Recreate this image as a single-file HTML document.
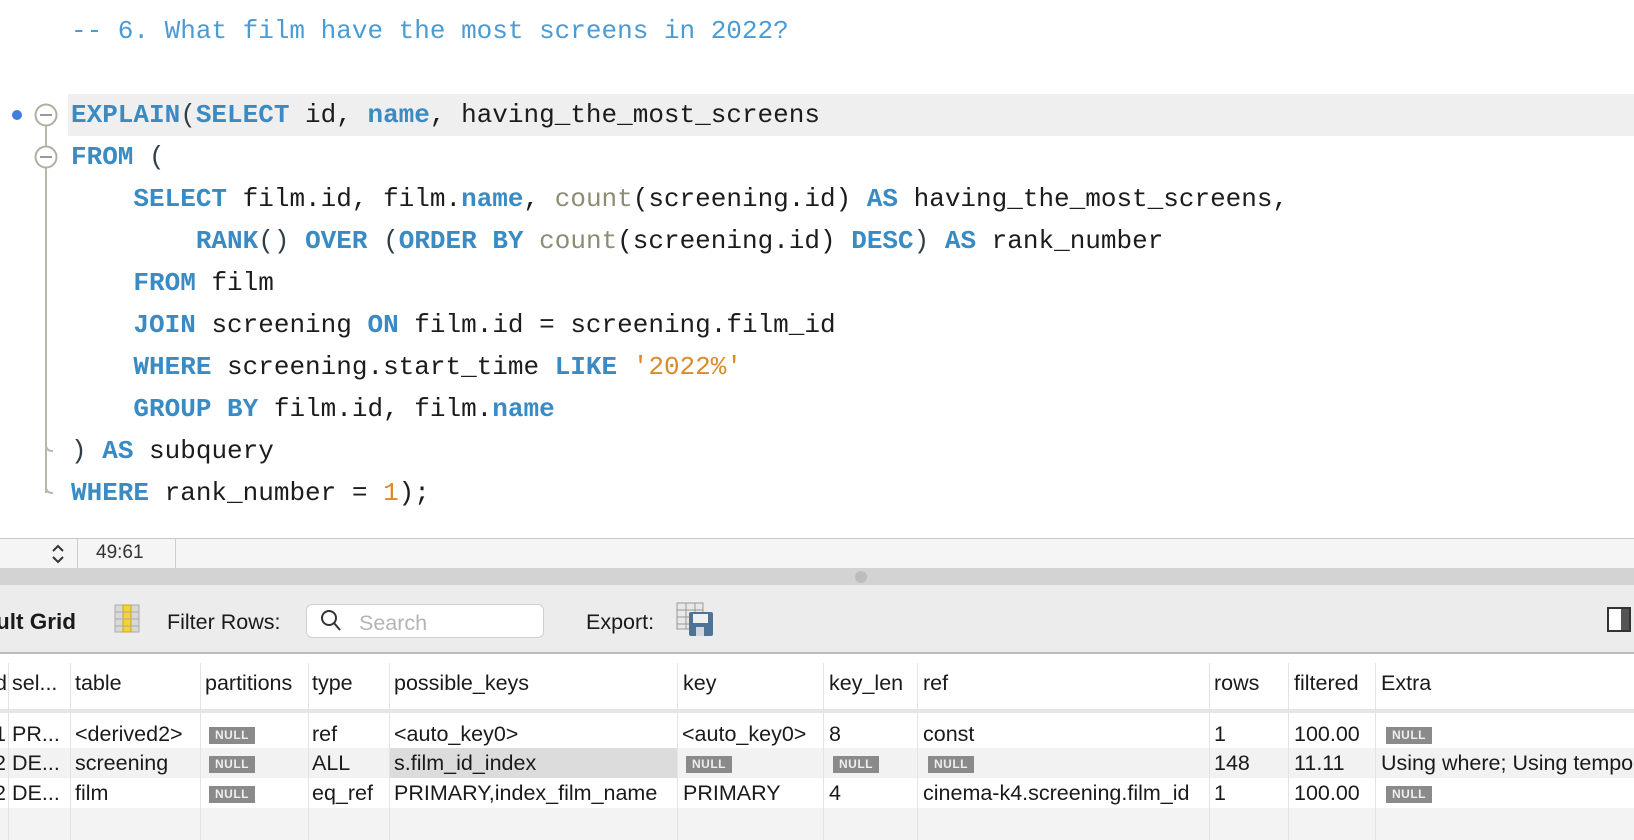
<!DOCTYPE html>
<html><head><style>
body{margin:0;width:1634px;height:840px;overflow:hidden;background:#fff;position:relative;font-family:"Liberation Sans",sans-serif}
.l{position:absolute;left:71px;height:42px;line-height:42px;font-family:"Liberation Mono",monospace;font-size:26px;color:#1c1c1c;white-space:pre}
.k{color:#3a8bc4;font-weight:bold}
.c{color:#4b9bd3}
.f{color:#8e8c74}
.s{color:#d98b2b}
.p{color:#2f3f48}
.a{position:absolute}
.t{position:absolute;font-size:21.5px;color:#1a1a1a;white-space:nowrap;line-height:30px}
.n{display:inline-block;background:#8a8a8a;color:#eee;font-size:12px;font-weight:bold;line-height:17px;padding:0 6px;vertical-align:middle;letter-spacing:.5px}
.v{position:absolute;top:663px;width:1px;height:177px;background:#e3e3e3}
</style></head><body>
<div class="a" style="left:68px;top:94px;width:1566px;height:42px;background:#efefef"></div>
<div class="l" style="top:10px"><span class="c">-- 6. What film have the most screens in 2022?</span></div>
<div class="l" style="top:94px"><span class="k">EXPLAIN</span><span class="p">(</span><span class="k">SELECT</span> id, <span class="k">name</span>, having_the_most_screens</div>
<div class="l" style="top:136px"><span class="k">FROM</span> <span class="p">(</span></div>
<div class="l" style="top:178px">    <span class="k">SELECT</span> film.id, film.<span class="k">name</span>, <span class="f">count</span>(screening.id) <span class="k">AS</span> having_the_most_screens,</div>
<div class="l" style="top:220px">        <span class="k">RANK</span><span class="p">()</span> <span class="k">OVER</span> <span class="p">(</span><span class="k">ORDER BY</span> <span class="f">count</span>(screening.id) <span class="k">DESC</span><span class="p">)</span> <span class="k">AS</span> rank_number</div>
<div class="l" style="top:262px">    <span class="k">FROM</span> film</div>
<div class="l" style="top:304px">    <span class="k">JOIN</span> screening <span class="k">ON</span> film.id = screening.film_id</div>
<div class="l" style="top:346px">    <span class="k">WHERE</span> screening.start_time <span class="k">LIKE</span> <span class="s">'2022%'</span></div>
<div class="l" style="top:388px">    <span class="k">GROUP BY</span> film.id, film.<span class="k">name</span></div>
<div class="l" style="top:430px"><span class="p">)</span> <span class="k">AS</span> subquery</div>
<div class="l" style="top:472px"><span class="k">WHERE</span> rank_number = <span class="s">1</span>);</div>
<svg class="a" style="left:0;top:90px" width="70" height="420">
<circle cx="17" cy="25" r="5" fill="#3f7fe0"/>
<line x1="46" y1="36" x2="46" y2="56" stroke="#b8b8a8" stroke-width="2"/>
<line x1="46" y1="78" x2="46" y2="403" stroke="#b8b8a8" stroke-width="2"/>
<path d="M46 355 q0 6 7 6" fill="none" stroke="#b8b8a8" stroke-width="2"/>
<path d="M46 397 q0 6 7 6" fill="none" stroke="#b8b8a8" stroke-width="2"/>
<circle cx="46" cy="25" r="10.5" fill="#fff" stroke="#b0b0a0" stroke-width="2"/>
<line x1="40" y1="25" x2="52" y2="25" stroke="#999" stroke-width="2"/>
<circle cx="46" cy="67" r="10.5" fill="#fff" stroke="#b0b0a0" stroke-width="2"/>
<line x1="40" y1="67" x2="52" y2="67" stroke="#999" stroke-width="2"/>
</svg>
<!-- status bar -->
<div class="a" style="left:0;top:538px;width:1634px;height:30px;background:#f5f5f5;border-top:1px solid #c8c8c8"></div>
<div class="a" style="left:77px;top:539px;width:1px;height:29px;background:#ccc"></div>
<div class="a" style="left:175px;top:539px;width:1px;height:29px;background:#ccc"></div>
<svg class="a" style="left:50px;top:543px" width="16" height="22"><path d="M3 8l5-5 5 5M3 14l5 5 5-5" fill="none" stroke="#333" stroke-width="2"/></svg>
<div class="t" style="left:96px;top:538px;font-size:19px;color:#333">49:61</div>
<div class="a" style="left:0;top:568px;width:1634px;height:17px;background:#d3d3d3"></div>
<div class="a" style="left:855px;top:571px;width:12px;height:12px;border-radius:6px;background:#bdbdbd"></div>
<!-- toolbar -->
<div class="a" style="left:0;top:585px;width:1634px;height:67px;background:#ececec;border-bottom:2px solid #bcbcbc"></div>
<div class="t" style="left:-4px;top:607px;font-weight:bold;font-size:22.5px">ult Grid</div>
<svg class="a" style="left:114px;top:604px" width="28" height="30"><rect x="1" y="1" width="24" height="27" fill="#d8d8d8" stroke="#aaa"/><rect x="9" y="1" width="8" height="27" fill="#f4d23a" stroke="#c8a820"/><path d="M1 8h24M1 15h24M1 22h24" stroke="#aaa"/></svg>
<div class="t" style="left:167px;top:607px">Filter Rows:</div>
<div class="a" style="left:306px;top:604px;width:236px;height:32px;background:#fff;border:1px solid #cfcfcf;border-radius:6px"></div>
<svg class="a" style="left:320px;top:609px" width="24" height="24"><circle cx="9" cy="9" r="7" fill="none" stroke="#333" stroke-width="2"/><path d="M14 14l6 7" stroke="#333" stroke-width="2"/></svg>
<div class="t" style="left:359px;top:608px;color:#b4b4b4">Search</div>
<div class="t" style="left:586px;top:607px">Export:</div>
<svg class="a" style="left:676px;top:601px" width="40" height="40"><rect x="1" y="2" width="26" height="26" fill="#e8e8e8" stroke="#999"/><path d="M1 9h26M1 16h26M1 23h26M10 2v26M19 2v26" stroke="#999"/><rect x="13" y="11" width="24" height="24" rx="2" fill="#4e7397"/><rect x="17" y="13" width="15" height="9" fill="#f0f0f0"/><rect x="20" y="26" width="8" height="9" fill="#cfd8e0"/></svg>
<div class="a" style="left:1607px;top:607px;width:24px;height:25px;border:2px solid #333;box-sizing:border-box;background:linear-gradient(90deg,#fff 60%,#555 60%)"></div>
<!-- grid -->
<div class="a" style="left:0;top:709px;width:1634px;height:4px;background:#e6e6e6"></div>
<div class="a" style="left:0;top:748px;width:1634px;height:30px;background:#f2f2f2"></div>
<div class="a" style="left:389px;top:748px;width:288px;height:30px;background:#dcdcdc"></div>
<div class="a" style="left:0;top:808px;width:1634px;height:32px;background:#f3f3f3"></div>
<div class="v" style="left:8px"></div><div class="v" style="left:70px"></div><div class="v" style="left:200px"></div><div class="v" style="left:308px"></div><div class="v" style="left:389px"></div><div class="v" style="left:677px"></div><div class="v" style="left:823px"></div><div class="v" style="left:917px"></div><div class="v" style="left:1209px"></div><div class="v" style="left:1288px"></div><div class="v" style="left:1375px"></div>
<div class="t" style="left:-5px;top:668px">d</div><div class="t" style="left:12px;top:668px">sel...</div><div class="t" style="left:75px;top:668px">table</div><div class="t" style="left:205px;top:668px">partitions</div><div class="t" style="left:312px;top:668px">type</div><div class="t" style="left:394px;top:668px">possible_keys</div><div class="t" style="left:683px;top:668px">key</div><div class="t" style="left:829px;top:668px">key_len</div><div class="t" style="left:923px;top:668px">ref</div><div class="t" style="left:1214px;top:668px">rows</div><div class="t" style="left:1294px;top:668px">filtered</div><div class="t" style="left:1381px;top:668px">Extra</div>

<div class="t" style="left:-6px;top:719px">1</div><div class="t" style="left:12px;top:719px">PR...</div><div class="t" style="left:75px;top:719px">&lt;derived2&gt;</div><div class="t" style="left:209px;top:719px"><span class="n">NULL</span></div><div class="t" style="left:312px;top:719px">ref</div><div class="t" style="left:394px;top:719px">&lt;auto_key0&gt;</div><div class="t" style="left:682px;top:719px">&lt;auto_key0&gt;</div><div class="t" style="left:829px;top:719px">8</div><div class="t" style="left:923px;top:719px">const</div><div class="t" style="left:1214px;top:719px">1</div><div class="t" style="left:1294px;top:719px">100.00</div><div class="t" style="left:1386px;top:719px"><span class="n">NULL</span></div>

<div class="t" style="left:-6px;top:748px">2</div><div class="t" style="left:12px;top:748px">DE...</div><div class="t" style="left:75px;top:748px">screening</div><div class="t" style="left:209px;top:748px"><span class="n">NULL</span></div><div class="t" style="left:312px;top:748px">ALL</div><div class="t" style="left:394px;top:748px">s.film_id_index</div><div class="t" style="left:686px;top:748px"><span class="n">NULL</span></div><div class="t" style="left:833px;top:748px"><span class="n">NULL</span></div><div class="t" style="left:928px;top:748px"><span class="n">NULL</span></div><div class="t" style="left:1214px;top:748px">148</div><div class="t" style="left:1294px;top:748px">11.11</div><div class="t" style="left:1381px;top:748px">Using where; Using temporary</div>

<div class="t" style="left:-6px;top:778px">2</div><div class="t" style="left:12px;top:778px">DE...</div><div class="t" style="left:75px;top:778px">film</div><div class="t" style="left:209px;top:778px"><span class="n">NULL</span></div><div class="t" style="left:312px;top:778px">eq_ref</div><div class="t" style="left:394px;top:778px">PRIMARY,index_film_name</div><div class="t" style="left:683px;top:778px">PRIMARY</div><div class="t" style="left:829px;top:778px">4</div><div class="t" style="left:923px;top:778px">cinema-k4.screening.film_id</div><div class="t" style="left:1214px;top:778px">1</div><div class="t" style="left:1294px;top:778px">100.00</div><div class="t" style="left:1386px;top:778px"><span class="n">NULL</span></div>
</body></html>
